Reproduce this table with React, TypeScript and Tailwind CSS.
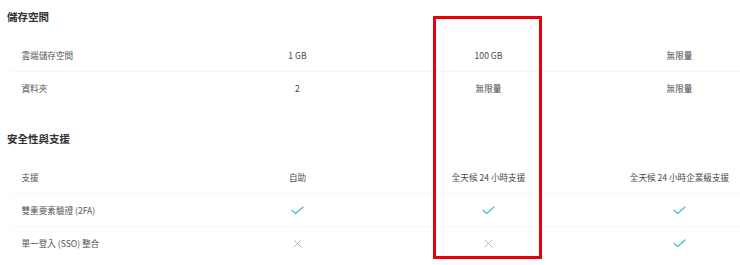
import React from "react";

const font = { fontFamily: '"Noto Sans CJK TC", "Noto Sans", sans-serif' };

function Check() {
  return (
    <svg width="13" height="9" viewBox="0 0 13 9" fill="none">
      <path d="M1 4.2 L4.6 7.6 L12 1" stroke="#45bfca" strokeWidth="1.3" strokeLinecap="round" strokeLinejoin="round" />
    </svg>
  );
}

function Cross() {
  return (
    <svg width="9" height="9" viewBox="0 0 9 9" fill="none">
      <path d="M0.8 0.8 L8.2 8.2 M8.2 0.8 L0.8 8.2" stroke="#bdbdbd" strokeWidth="1" strokeLinecap="round" />
    </svg>
  );
}

type Cell = string | "check" | "cross";

function Value({ v }: { v: Cell }) {
  if (v === "check") return <Check />;
  if (v === "cross") return <Cross />;
  return <span>{v}</span>;
}

function Row({ label, values, last }: { label: string; values: Cell[]; last?: boolean }) {
  return (
    <div
      className={
        "grid grid-cols-[191.5px_191px_191px_191px] h-[33px] items-center text-[8.6px] text-[#4a4a4a] " +
        (last ? "" : "border-b border-[#f7f7f7]")
      }
    >
      <div className="pl-[11px] text-[#555]">{label}</div>
      {values.map((v, i) => (
        <div key={i} className="flex justify-center items-center">
          <Value v={v} />
        </div>
      ))}
    </div>
  );
}

export default function App() {
  return (
    <div className="relative w-[740px] h-[265px] overflow-hidden bg-white" style={font}>
      <div className="pt-[7px]">
        <div className="pl-[7px] h-5 flex items-center text-[10.5px] font-bold text-[#333]">儲存空間</div>
        <div className="mt-[12px] pl-[10.5px]">
          <Row label="雲端儲存空間" values={["1 GB", "100 GB", "無限量"]} />
          <Row label="資料夾" values={["2", "無限量", "無限量"]} last />
        </div>
        <div className="mt-[24px] pl-[7px] h-5 flex items-center text-[10.5px] font-bold text-[#333]">安全性與支援</div>
        <div className="mt-[12px] pl-[10.5px]">
          <Row label="支援" values={["自助", "全天候 24 小時支援", "全天候 24 小時企業級支援"]} />
          <Row label="雙重要素驗證 (2FA)" values={["check", "check", "check"]} />
          <Row label="單一登入 (SSO) 整合" values={["cross", "cross", "check"]} last />
        </div>
      </div>
      <div className="absolute left-[433px] top-[16px] w-[109px] h-[243px] border-[3px] border-[#e8000b]" />
    </div>
  );
}
